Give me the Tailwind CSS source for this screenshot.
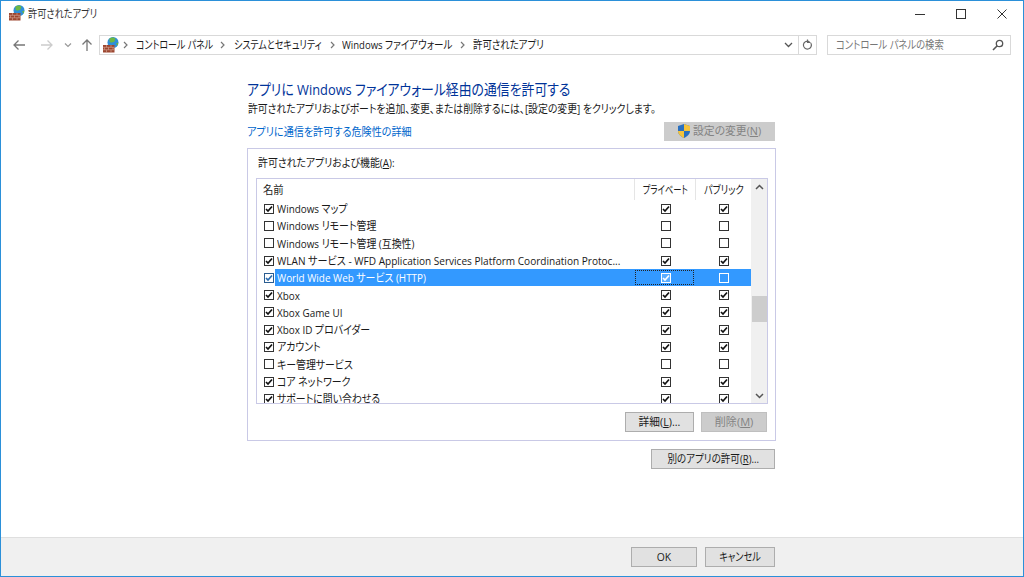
<!DOCTYPE html>
<html lang="ja"><head><meta charset="utf-8">
<script src="https://cdn.jsdelivr.net/npm/@tailwindcss/browser@4"></script>
</head>
<body class="bg-white">
<svg class="hidden" width="0" height="0">
<symbol id="fw" viewBox="0 0 16 16">
<circle cx="10" cy="5.500" r="5.500" fill="#2f8fd8"/><path d="M6.500 1.500c2-1.300 4.500-1.300 6 .3l-1.200 3-3.300 1-1.500-1.300zM13 6.500l2.400-1 -.8 3.200z" fill="#6cb843"/>
<path d="M0 8h11.500v7.500H0z" fill="#9c4630"/><path d="M0 10.300h11.500M0 12.800h11.500M3.500 8v2.300M8 8v2.300M1.500 10.300v2.500M5.500 10.300v2.500M10 10.300v2.500M3.500 12.800v2.700M8 12.800v2.700" stroke="#d9a898" stroke-width=".6" fill="none"/>
</symbol>
<symbol id="ck" viewBox="0 0 10 10"><rect x=".5" y=".5" width="9" height="9" fill="#fff" stroke="#333"/><path d="M2 5l2 2 4-4.500" fill="none" stroke="#111" stroke-width="1.700"/></symbol>
<symbol id="un" viewBox="0 0 10 10"><rect x=".5" y=".5" width="9" height="9" fill="#fff" stroke="#333"/></symbol>
<symbol id="cv" viewBox="0 0 5 8"><path d="M1 1l3 3-3 3" fill="none" stroke="#777" stroke-width="1.200"/></symbol>
</svg>
<div class="flex flex-col h-[577px] w-[1024px] overflow-hidden border border-[#2b90d9] font-['Open_Sans','Noto_Sans_CJK_JP',sans-serif] [font-feature-settings:'palt'] text-[11.5px] text-[#1a1a1a]">
  <!-- title bar -->
  <div class="flex items-center h-[25px] shrink-0 pl-[8px]">
    <svg class="w-4 h-4 mr-[3px] -mt-[1px]"><use href="#fw"/></svg>
    <span class="whitespace-nowrap text-[#333] origin-left scale-x-[.8]">許可されたアプリ</span>
    <div class="ml-auto flex items-center mr-[1px]">
      <div class="w-[41px] h-[25px] flex items-center justify-center"><svg width="10" height="10"><path d="M0 5.500h10" stroke="#333"/></svg></div>
      <div class="w-[41px] h-[25px] flex items-center justify-center"><svg width="10" height="10"><rect x=".5" y=".5" width="9" height="9" fill="none" stroke="#333"/></svg></div>
      <div class="w-[41px] h-[25px] flex items-center justify-center"><svg width="10" height="10"><path d="M.5.500l9 9M9.500.500l-9 9" stroke="#333"/></svg></div>
    </div>
  </div>
  <!-- nav bar -->
  <div class="flex items-center h-[20px] mt-[9px] shrink-0">
    <svg width="14" height="12" class="ml-[11px]"><path d="M13 6H2M6.500 1.500L2 6l4.500 4.500" fill="none" stroke="#777" stroke-width="1.300"/></svg>
    <svg width="14" height="12" class="ml-[14px]"><path d="M1 6h11M7.500 1.500L12 6l-4.500 4.500" fill="none" stroke="#ccc" stroke-width="1.300"/></svg>
    <svg width="8" height="6" class="ml-[10px]"><path d="M1 1.500l3 3 3-3" fill="none" stroke="#999" stroke-width="1.200"/></svg>
    <svg width="12" height="14" class="ml-[9px]"><path d="M6 13V2M1.500 6.500L6 2l4.500 4.500" fill="none" stroke="#777" stroke-width="1.300"/></svg>
    <div class="ml-[6px] w-[718px] h-[20px] border border-[#d9d9d9] flex items-center">
      <svg class="w-4 h-4 ml-[3px] shrink-0"><use href="#fw"/></svg>
      <svg class="w-[5px] h-[8px] ml-[4px] shrink-0"><use href="#cv"/></svg>
      <span class="ml-[8px] w-[76px] shrink-0 whitespace-nowrap origin-left scale-x-[.78]">コントロール パネル</span>
      <svg class="w-[5px] h-[8px] ml-[8px] shrink-0"><use href="#cv"/></svg>
      <span class="ml-[9px] w-[88px] shrink-0 whitespace-nowrap origin-left scale-x-[.785]">システムとセキュリティ</span>
      <svg class="w-[5px] h-[8px] ml-[8px] shrink-0"><use href="#cv"/></svg>
      <span class="ml-[7px] w-[110px] shrink-0 whitespace-nowrap origin-left scale-x-[.83]">Windows ファイアウォール</span>
      <svg class="w-[5px] h-[8px] ml-[8px] shrink-0"><use href="#cv"/></svg>
      <span class="ml-[8px] w-[71px] shrink-0 whitespace-nowrap origin-left scale-x-[.82]">許可されたアプリ</span>
      <svg width="9" height="6" class="ml-auto mr-[5px]"><path d="M1 1l3.500 3.500L8 1" fill="none" stroke="#555" stroke-width="1.300"/></svg>
      <div class="w-[18px] h-[18px] border-l border-[#d9d9d9] flex items-center justify-center"><svg width="11" height="12"><path d="M8.800 4a4 4 0 1 1-1.300-1.300M5.500.500v3h3" fill="none" stroke="#666" stroke-width="1.200"/></svg></div>
    </div>
    <div class="ml-[10px] w-[184px] h-[20px] border border-[#d9d9d9] flex items-center pl-[8px] text-[#777]">
      <span class="w-[107px] whitespace-nowrap origin-left scale-x-[.81]">コントロール パネルの検索</span>
      <svg width="12" height="12" class="ml-auto mr-[6px]"><circle cx="7.500" cy="4.500" r="3.200" fill="none" stroke="#555" stroke-width="1.300"/><path d="M5 7l-4 4" stroke="#555" stroke-width="1.600"/></svg>
    </div>
  </div>
  <!-- main -->
  <div class="flex-1 pl-[246px] w-[775px] min-h-0">
    <h1 class="text-[#003399] text-[15px] leading-[20px] mt-[24px] whitespace-nowrap origin-left scale-x-[.857]">アプリに Windows ファイアウォール経由の通信を許可する</h1>
    <p class="leading-[16px] mt-[2px] ml-[1px] whitespace-nowrap origin-left scale-x-[.857]">許可されたアプリおよびポートを追加、変更、または削除するには、[設定の変更] をクリックします。</p>
    <div class="flex items-center justify-between mt-[4px] h-[20px] w-[528px]">
      <a class="text-[#0066cc] mt-[2px] whitespace-nowrap origin-left scale-x-[.877]">アプリに通信を許可する危険性の詳細</a>
      <div class="w-[111px] h-[19px] bg-[#cccccc] flex items-center pl-[12px] text-[#838383]">
        <svg width="16" height="16" viewBox="0 0 16 16" class="shrink-0"><path d="M8 1l6 2v5c0 3.500-3 5.500-6 7-3-1.500-6-3.500-6-7V3z" fill="#2a70c0"/><path d="M8 1l6 2v5H8zM8 8v7c-3-1.500-6-3.500-6-7z" fill="#f5c33b"/></svg>
        <span class="ml-[1px] w-[68px] whitespace-nowrap origin-left scale-x-[.94]">設定の変更(<u>N</u>)</span>
      </div>
    </div>
    <!-- group -->
    <div class="mt-[7px] w-[529px] h-[293px] border border-[#c9c9e6] pt-[6px] pl-[8px]">
      <div class="leading-[16px] ml-[2px] whitespace-nowrap origin-left scale-x-[.86]">許可されたアプリおよび機能(<u>A</u>):</div>
      <div class="mt-[7px] w-[512px] h-[226px] border border-[#c9c9e6] flex overflow-hidden">
        <div class="w-[494px]">
          <div class="flex h-[21px] items-center">
            <div class="w-[377px] pl-[6px]"><span class="inline-block origin-left scale-x-[.9]">名前</span></div>
            <div class="w-[61px] h-full border-l border-[#e5e5e5] flex items-center justify-center whitespace-nowrap"><span class="scale-x-[.72]">プライベート</span></div>
            <div class="w-[56px] h-full border-l border-[#e5e5e5] flex items-center justify-center whitespace-nowrap"><span class="scale-x-[.8]">パブリック</span></div>
          </div>
          <div class="h-[17.300px] flex items-center pl-[7px]"><svg class="w-[10px] h-[10px] mr-[3px] shrink-0"><use href="#ck"/></svg><span class="w-[359px] whitespace-nowrap origin-left scale-x-[.86]">Windows マップ</span><span class="w-[59px] flex justify-center"><svg class="w-[10px] h-[10px]"><use href="#ck"/></svg></span><span class="w-[56px] pl-[2px] flex justify-center"><svg class="w-[10px] h-[10px]"><use href="#ck"/></svg></span></div>
          <div class="h-[17.300px] flex items-center pl-[7px]"><svg class="w-[10px] h-[10px] mr-[3px] shrink-0"><use href="#un"/></svg><span class="w-[359px] whitespace-nowrap origin-left scale-x-[.86]">Windows リモート管理</span><span class="w-[59px] flex justify-center"><svg class="w-[10px] h-[10px]"><use href="#un"/></svg></span><span class="w-[56px] pl-[2px] flex justify-center"><svg class="w-[10px] h-[10px]"><use href="#un"/></svg></span></div>
          <div class="h-[17.300px] flex items-center pl-[7px]"><svg class="w-[10px] h-[10px] mr-[3px] shrink-0"><use href="#un"/></svg><span class="w-[359px] whitespace-nowrap origin-left scale-x-[.86]">Windows リモート管理 (互換性)</span><span class="w-[59px] flex justify-center"><svg class="w-[10px] h-[10px]"><use href="#un"/></svg></span><span class="w-[56px] pl-[2px] flex justify-center"><svg class="w-[10px] h-[10px]"><use href="#un"/></svg></span></div>
          <div class="h-[17.300px] flex items-center pl-[7px]"><svg class="w-[10px] h-[10px] mr-[3px] shrink-0"><use href="#ck"/></svg><span class="w-[359px] whitespace-nowrap origin-left scale-x-[.875]">WLAN サービス - WFD Application Services Platform Coordination Protoc...</span><span class="w-[59px] flex justify-center"><svg class="w-[10px] h-[10px]"><use href="#ck"/></svg></span><span class="w-[56px] pl-[2px] flex justify-center"><svg class="w-[10px] h-[10px]"><use href="#ck"/></svg></span></div>
          <div class="h-[17.300px] flex items-center pl-[7px]">
            <svg width="10" height="10" viewBox="0 0 10 10" class="mr-[1px] shrink-0"><rect x=".5" y=".5" width="9" height="9" fill="#fff" stroke="#2a5c90"/><path d="M2 5l2 2 4-4.500" fill="none" stroke="#2a6cb0" stroke-width="1.700"/></svg>
            <div class="flex-1 h-full bg-[#3399ff] flex items-center text-white relative">
              <span class="w-[361px] pl-[2px] whitespace-nowrap"><span class="inline-block origin-left scale-x-[.86]">World Wide Web サービス (HTTP)</span></span>
              <span class="w-[59px] flex justify-center"><svg width="10" height="10" viewBox="0 0 10 10"><rect x=".5" y=".5" width="9" height="9" fill="#5aadff" stroke="#fff"/><path d="M2 5l2 2 4-4.500" fill="none" stroke="#fff" stroke-width="1.700"/></svg></span>
              <span class="w-[56px] pl-[2px] flex justify-center"><svg width="10" height="10" viewBox="0 0 10 10"><rect x=".5" y=".5" width="9" height="9" fill="none" stroke="#fff"/></svg></span>
              <div class="absolute left-[360px] top-[1px] w-[59px] h-[15px] border border-dotted border-[#222]"></div>
            </div>
          </div>
          <div class="h-[17.300px] flex items-center pl-[7px]"><svg class="w-[10px] h-[10px] mr-[3px] shrink-0"><use href="#ck"/></svg><span class="w-[359px] whitespace-nowrap origin-left scale-x-[.86]">Xbox</span><span class="w-[59px] flex justify-center"><svg class="w-[10px] h-[10px]"><use href="#ck"/></svg></span><span class="w-[56px] pl-[2px] flex justify-center"><svg class="w-[10px] h-[10px]"><use href="#ck"/></svg></span></div>
          <div class="h-[17.300px] flex items-center pl-[7px]"><svg class="w-[10px] h-[10px] mr-[3px] shrink-0"><use href="#ck"/></svg><span class="w-[359px] whitespace-nowrap origin-left scale-x-[.86]">Xbox Game UI</span><span class="w-[59px] flex justify-center"><svg class="w-[10px] h-[10px]"><use href="#ck"/></svg></span><span class="w-[56px] pl-[2px] flex justify-center"><svg class="w-[10px] h-[10px]"><use href="#ck"/></svg></span></div>
          <div class="h-[17.300px] flex items-center pl-[7px]"><svg class="w-[10px] h-[10px] mr-[3px] shrink-0"><use href="#ck"/></svg><span class="w-[359px] whitespace-nowrap origin-left scale-x-[.86]">Xbox ID プロバイダー</span><span class="w-[59px] flex justify-center"><svg class="w-[10px] h-[10px]"><use href="#ck"/></svg></span><span class="w-[56px] pl-[2px] flex justify-center"><svg class="w-[10px] h-[10px]"><use href="#ck"/></svg></span></div>
          <div class="h-[17.300px] flex items-center pl-[7px]"><svg class="w-[10px] h-[10px] mr-[3px] shrink-0"><use href="#ck"/></svg><span class="w-[359px] whitespace-nowrap origin-left scale-x-[.86]">アカウント</span><span class="w-[59px] flex justify-center"><svg class="w-[10px] h-[10px]"><use href="#ck"/></svg></span><span class="w-[56px] pl-[2px] flex justify-center"><svg class="w-[10px] h-[10px]"><use href="#ck"/></svg></span></div>
          <div class="h-[17.300px] flex items-center pl-[7px]"><svg class="w-[10px] h-[10px] mr-[3px] shrink-0"><use href="#un"/></svg><span class="w-[359px] whitespace-nowrap origin-left scale-x-[.86]">キー管理サービス</span><span class="w-[59px] flex justify-center"><svg class="w-[10px] h-[10px]"><use href="#un"/></svg></span><span class="w-[56px] pl-[2px] flex justify-center"><svg class="w-[10px] h-[10px]"><use href="#un"/></svg></span></div>
          <div class="h-[17.300px] flex items-center pl-[7px]"><svg class="w-[10px] h-[10px] mr-[3px] shrink-0"><use href="#ck"/></svg><span class="w-[359px] whitespace-nowrap origin-left scale-x-[.86]">コア ネットワーク</span><span class="w-[59px] flex justify-center"><svg class="w-[10px] h-[10px]"><use href="#ck"/></svg></span><span class="w-[56px] pl-[2px] flex justify-center"><svg class="w-[10px] h-[10px]"><use href="#ck"/></svg></span></div>
          <div class="h-[17.300px] flex items-center pl-[7px]"><svg class="w-[10px] h-[10px] mr-[3px] shrink-0"><use href="#ck"/></svg><span class="w-[359px] whitespace-nowrap origin-left scale-x-[.86]">サポートに問い合わせる</span><span class="w-[59px] flex justify-center"><svg class="w-[10px] h-[10px]"><use href="#ck"/></svg></span><span class="w-[56px] pl-[2px] flex justify-center"><svg class="w-[10px] h-[10px]"><use href="#ck"/></svg></span></div>
        </div>
        <div class="w-[16px] h-full bg-[#f0f0f0] flex flex-col items-center">
          <svg width="9" height="6" class="mt-[5px] shrink-0"><path d="M1 5l3.500-3.500L8 5" fill="none" stroke="#555" stroke-width="1.500"/></svg>
          <div class="w-[15px] h-[26px] bg-[#cdcdcd] mt-[106px] shrink-0"></div>
          <svg width="9" height="6" class="mt-[71px] shrink-0"><path d="M1 1l3.500 3.500L8 1" fill="none" stroke="#555" stroke-width="1.500"/></svg>
        </div>
      </div>
      <div class="flex justify-end gap-[7px] w-[511px] mt-[8px]">
        <div class="w-[69px] h-[20px] bg-[#e1e1e1] border border-[#adadad] flex items-center justify-center whitespace-nowrap"><span class="scale-x-[.93]">詳細(<u>L</u>)...</span></div>
        <div class="w-[66px] h-[20px] bg-[#cccccc] border border-[#bfbfbf] flex items-center justify-center text-[#838383] whitespace-nowrap"><span class="scale-x-[.96]">削除(<u>M</u>)</span></div>
      </div>
    </div>
    <div class="flex justify-end w-[528px] mt-[8px]">
      <div class="w-[124px] h-[20px] bg-[#e1e1e1] border border-[#adadad] flex items-center justify-center whitespace-nowrap"><span class="scale-x-[.83]">別のアプリの許可(<u>R</u>)...</span></div>
    </div>
  </div>
  <!-- footer -->
  <div class="h-[39px] shrink-0 border-t border-[#dfdfdf] bg-[#f0f0f0] flex items-center pl-[630px] gap-[8px]">
    <div class="w-[66px] h-[20px] bg-[#e1e1e1] border border-[#adadad] flex items-center justify-center"><span class="scale-x-[.9]">OK</span></div>
    <div class="w-[70px] h-[20px] bg-[#e1e1e1] border border-[#adadad] flex items-center justify-center whitespace-nowrap"><span class="scale-x-[.8]">キャンセル</span></div>
  </div>
</div>
</body></html>
